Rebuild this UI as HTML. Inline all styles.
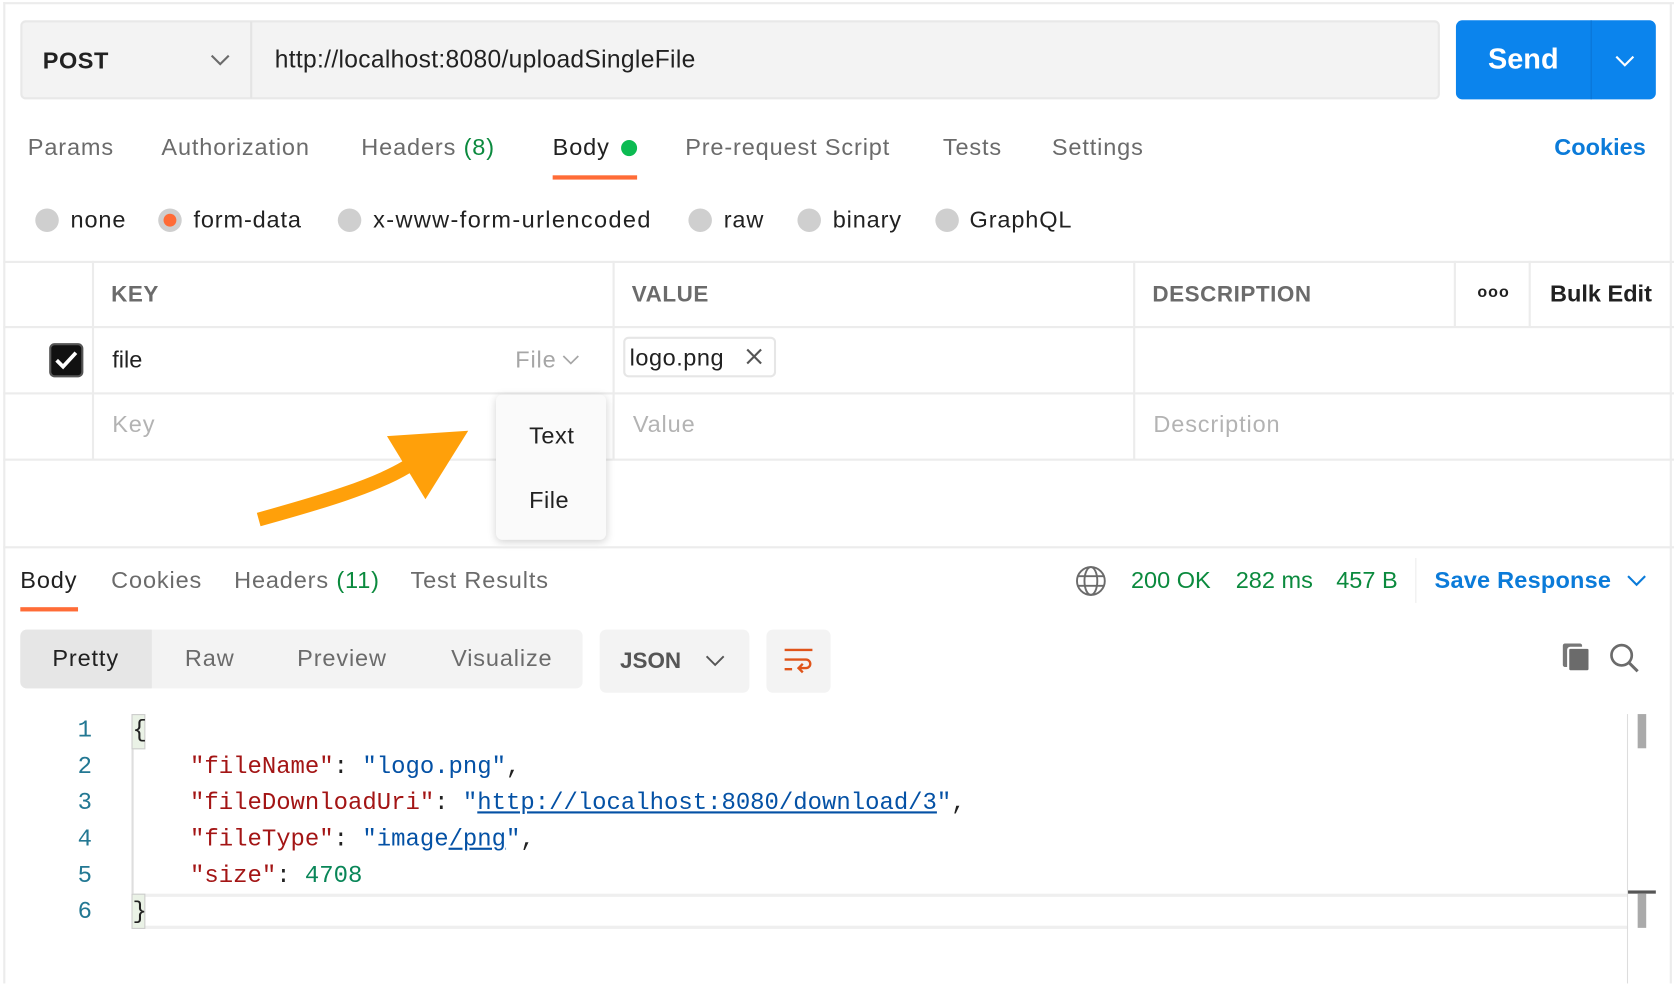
<!DOCTYPE html>
<html><head><meta charset="utf-8"><style>
*{margin:0;padding:0;box-sizing:border-box}
html,body{width:1674px;height:984px;overflow:hidden;background:#fff}
#w{position:absolute;left:0;top:0;width:1566px;height:920px;transform:scale(1.06897);transform-origin:0 0;font-family:"Liberation Sans",sans-serif;color:#212121}
.a{position:absolute;white-space:nowrap;line-height:1}
.t{font-size:22px;color:#6b6b6b;letter-spacing:0.8px}
.hl{position:absolute;height:2px;background:#ececec}
.vl{position:absolute;width:2px;background:#ececec}
.rd{position:absolute;width:22px;height:22px;border-radius:50%;background:#cfcfcf}
.m{font-family:"Liberation Mono",monospace;font-size:22.4px;white-space:pre}
.k{color:#a31515}.s{color:#0451a5}.n{color:#098658}
</style></head><body><div id="w">
<div class="hl" style="left:3px;top:2px;width:1563px"></div>
<div class="vl" style="left:3px;top:2px;height:918px"></div>
<div class="vl" style="left:1562px;top:2px;height:918px"></div>

<div class="a" style="left:19px;top:19px;width:1328px;height:74px;background:#f3f3f3;border:2px solid #e8e8e8;border-radius:5px"></div>
<div class="vl" style="left:234px;top:20px;height:72px;background:#e4e4e4"></div>
<div class="a" style="left:40px;top:46px;font-size:22px;font-weight:bold;letter-spacing:0.5px">POST</div>
<svg class="a" style="left:196px;top:50px" width="20" height="12"><path d="M2 2l8 8 8-8" fill="none" stroke="#6b6b6b" stroke-width="2"/></svg>
<div class="a" style="left:257px;top:44px;font-size:23px;letter-spacing:0.3px">http://localhost:8080/uploadSingleFile</div>
<div class="a" style="left:1362px;top:19px;width:187px;height:74px;background:#0b84ed;border-radius:6px"></div>
<div class="vl" style="left:1488px;top:19px;height:74px;background:#0a74d3;width:1px"></div>
<div class="a" style="left:1392px;top:42px;font-size:27px;font-weight:bold;color:#fff">Send</div>
<svg class="a" style="left:1510px;top:51px" width="20" height="12"><path d="M2 2l8 8 8-8" fill="none" stroke="#fff" stroke-width="2"/></svg>

<div class="a t" style="left:26px;top:127px">Params</div>
<div class="a t" style="left:151px;top:127px">Authorization</div>
<div class="a t" style="left:338px;top:127px">Headers <span style="color:#0b8a3e">(8)</span></div>
<div class="a t" style="left:517px;top:127px;color:#212121">Body</div>
<div class="a" style="left:581px;top:131px;width:15px;height:15px;border-radius:50%;background:#0cbb52"></div>
<div class="a" style="left:517px;top:164px;width:79px;height:4px;background:#ff6c37"></div>
<div class="a t" style="left:641px;top:127px">Pre-request Script</div>
<div class="a t" style="left:882px;top:127px">Tests</div>
<div class="a t" style="left:984px;top:127px">Settings</div>
<div class="a" style="left:1454px;top:127px;font-size:22px;font-weight:bold;color:#0b7bd9">Cookies</div>

<div class="rd" style="left:33px;top:195px"></div><div class="a t" style="left:66px;top:195px;color:#212121">none</div>
<div class="rd" style="left:148px;top:195px"></div><div class="a" style="left:153px;top:200px;width:12px;height:12px;border-radius:50%;background:#ff6c37"></div><div class="a t" style="left:181px;top:195px;color:#212121">form-data</div>
<div class="rd" style="left:316px;top:195px"></div><div class="a t" style="left:349px;top:195px;color:#212121;letter-spacing:1.3px">x-www-form-urlencoded</div>
<div class="rd" style="left:644px;top:195px"></div><div class="a t" style="left:677px;top:195px;color:#212121">raw</div>
<div class="rd" style="left:746px;top:195px"></div><div class="a t" style="left:779px;top:195px;color:#212121">binary</div>
<div class="rd" style="left:875px;top:195px"></div><div class="a t" style="left:907px;top:195px;color:#212121">GraphQL</div>

<div class="hl" style="left:3px;top:244px;width:1563px"></div>
<div class="hl" style="left:3px;top:305px;width:1563px"></div>
<div class="hl" style="left:3px;top:367px;width:1563px"></div>
<div class="hl" style="left:3px;top:429px;width:1563px"></div>
<div class="vl" style="left:86px;top:244px;height:186px"></div>
<div class="vl" style="left:573px;top:244px;height:186px"></div>
<div class="vl" style="left:1060px;top:244px;height:186px"></div>
<div class="vl" style="left:1360px;top:244px;height:62px"></div>
<div class="vl" style="left:1430px;top:244px;height:62px"></div>
<div class="a" style="left:104px;top:265px;font-size:21px;font-weight:bold;color:#6b6b6b;letter-spacing:0.5px">KEY</div>
<div class="a" style="left:591px;top:265px;font-size:21px;font-weight:bold;color:#6b6b6b;letter-spacing:0.5px">VALUE</div>
<div class="a" style="left:1078px;top:265px;font-size:21px;font-weight:bold;color:#6b6b6b;letter-spacing:0.5px">DESCRIPTION</div>
<div class="a" style="left:1382px;top:266px;font-size:15px;font-weight:bold;letter-spacing:1px">ooo</div>
<div class="a" style="left:1450px;top:264px;font-size:22px;font-weight:bold">Bulk Edit</div>

<div class="a" style="left:46px;top:321px;width:32px;height:32px;border-radius:5px;background:#111;border:2px solid #555"></div>
<svg class="a" style="left:50px;top:326px" width="24" height="22"><path d="M3 11l6 6L21 4" fill="none" stroke="#fff" stroke-width="3.5"/></svg>
<div class="a" style="left:105px;top:326px;font-size:22px">file</div>
<div class="a t" style="left:482px;top:326px;color:#a6a6a6">File</div>
<svg class="a" style="left:526px;top:332px" width="16" height="10"><path d="M1 1l7 7 7-7" fill="none" stroke="#a6a6a6" stroke-width="1.6"/></svg>
<div class="a" style="left:583px;top:315px;width:143px;height:38px;border:2px solid #e6e6e6;border-radius:5px"></div>
<div class="a" style="left:589px;top:324px;font-size:22px;letter-spacing:0.5px">logo.png</div>
<svg class="a" style="left:698px;top:326px" width="15" height="15"><path d="M1 1l13 13M14 1L1 14" stroke="#555" stroke-width="2"/></svg>
<div class="a t" style="left:105px;top:386px;color:#b3b3b3">Key</div>
<div class="a t" style="left:592px;top:386px;color:#b3b3b3">Value</div>
<div class="a t" style="left:1079px;top:386px;color:#b3b3b3">Description</div>

<svg class="a" style="left:230px;top:395px" width="220" height="105"><path d="M12 91 C70 75 120 60 150 42" fill="none" stroke="#ffa00a" stroke-width="13"/><path d="M132 13 L208 8 L168 72 Z" fill="#ffa00a"/></svg>

<div class="a" style="left:464px;top:369px;width:103px;height:136px;background:#fafafa;border-radius:6px;box-shadow:0 2px 8px rgba(0,0,0,.18)"></div>
<div class="a" style="left:495px;top:397px;font-size:22px;letter-spacing:0.5px">Text</div>
<div class="a" style="left:495px;top:457px;font-size:22px;letter-spacing:0.5px">File</div>

<div class="hl" style="left:3px;top:511px;width:1563px"></div>
<div class="a t" style="left:19px;top:532px;color:#212121">Body</div>
<div class="a" style="left:19px;top:568px;width:54px;height:4px;background:#ff6c37"></div>
<div class="a t" style="left:104px;top:532px">Cookies</div>
<div class="a t" style="left:219px;top:532px">Headers <span style="color:#0b8a3e">(11)</span></div>
<div class="a t" style="left:384px;top:532px">Test Results</div>
<svg class="a" style="left:1006px;top:529px" width="29" height="29"><g fill="none" stroke="#6b6b6b" stroke-width="1.8"><circle cx="14.5" cy="14.5" r="13"/><ellipse cx="14.5" cy="14.5" rx="6" ry="13"/><path d="M2 10h25M2 19h25"/></g></svg>
<div class="a t" style="left:1058px;top:532px;color:#0b8a3e;letter-spacing:0">200 OK</div>
<div class="a t" style="left:1156px;top:532px;color:#0b8a3e;letter-spacing:0">282 ms</div>
<div class="a t" style="left:1250px;top:532px;color:#0b8a3e;letter-spacing:0">457 B</div>
<div class="vl" style="left:1324px;top:522px;height:42px;width:1px"></div>
<div class="a" style="left:1342px;top:532px;font-size:22px;font-weight:bold;color:#0b7bd9;letter-spacing:0.2px">Save Response</div>
<svg class="a" style="left:1522px;top:538px" width="18" height="11"><path d="M1 1l8 8 8-8" fill="none" stroke="#0b7bd9" stroke-width="2"/></svg>

<div class="a" style="left:19px;top:589px;width:526px;height:55px;background:#f3f3f3;border-radius:6px"></div>
<div class="a" style="left:19px;top:589px;width:123px;height:55px;background:#e6e6e6;border-radius:6px 0 0 6px"></div>
<div class="a t" style="left:49px;top:605px;color:#212121">Pretty</div>
<div class="a t" style="left:173px;top:605px">Raw</div>
<div class="a t" style="left:278px;top:605px">Preview</div>
<div class="a t" style="left:422px;top:605px">Visualize</div>
<div class="a" style="left:561px;top:589px;width:140px;height:59px;background:#f3f3f3;border-radius:6px"></div>
<div class="a" style="left:580px;top:608px;font-size:21px;font-weight:bold;color:#555">JSON</div>
<svg class="a" style="left:660px;top:613px" width="18" height="11"><path d="M1 1l8 8 8-8" fill="none" stroke="#555" stroke-width="1.8"/></svg>
<div class="a" style="left:717px;top:589px;width:60px;height:59px;background:#f3f3f3;border-radius:6px"></div>
<svg class="a" style="left:733px;top:605px" width="30" height="26"><g fill="none" stroke="#e0541a" stroke-width="2.2"><path d="M1 3h26M1 12h20a4 4 0 0 1 0 8h-6M1 21h7"/><path d="M18 16l-4 4 4 4"/></g></svg>
<svg class="a" style="left:1460px;top:600px" width="30" height="30"><rect x="2" y="2" width="18" height="22" rx="2" fill="#777"/><rect x="7" y="6" width="20" height="22" rx="2" fill="#6b6b6b" stroke="#fff" stroke-width="2"/></svg>
<svg class="a" style="left:1505px;top:601px" width="30" height="30"><circle cx="12" cy="12" r="9.5" fill="none" stroke="#6b6b6b" stroke-width="2.5"/><path d="M19 19l8 8" stroke="#6b6b6b" stroke-width="2.8"/></svg>

<div class="vl" style="left:123px;top:668px;height:200px;width:2px;background:#dedede"></div>
<div class="a" style="left:123px;top:668px;width:13px;height:33px;background:#eaf2e6;border:1px solid #ccc"></div>
<div class="a" style="left:123px;top:836px;width:1400px;height:33px;border-top:3px solid #efefef;border-bottom:3px solid #efefef"></div>
<div class="a" style="left:123px;top:836px;width:13px;height:33px;background:#eaf2e6;border:1px solid #ccc"></div>
<div class="vl" style="left:1522px;top:668px;height:252px;width:1px;background:#ddd"></div>
<div class="a" style="left:1532px;top:668px;width:8px;height:32px;background:#aaa"></div>
<div class="a" style="left:1523px;top:833px;width:26px;height:3px;background:#555"></div>
<div class="a" style="left:1532px;top:836px;width:8px;height:32px;background:#aaa"></div>

<div class="a m" style="left:60px;top:666px;width:26px;text-align:right;color:#237893;line-height:34px">1
2
3
4
5
6</div>
<div class="a m" style="left:124px;top:666px;line-height:34px;letter-spacing:0">{
    <span class="k">"fileName"</span>: <span class="s">"logo.png"</span>,
    <span class="k">"fileDownloadUri"</span>: <span class="s">"<u>http://localhost:8080/download/3</u>"</span>,
    <span class="k">"fileType"</span>: <span class="s">"image<u>/png</u>"</span>,
    <span class="k">"size"</span>: <span class="n">4708</span>
}</div>
</div></body></html>
